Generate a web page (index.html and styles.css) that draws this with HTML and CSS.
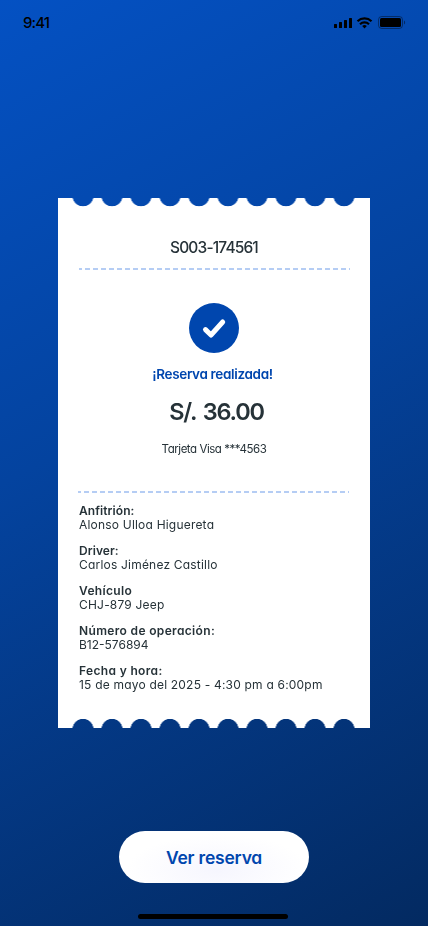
FILE: index.html
```html
<!DOCTYPE html>
<html lang="es">
<head>
<meta charset="utf-8">
<title>Reserva realizada</title>
<link rel="stylesheet" href="styles.css">
</head>
<body>
<div class="screen">
  <header class="status">
    <span class="time">9:41</span>
    <svg class="indicators" width="72" height="14" viewBox="0 0 72 14">
      <rect x="0" y="9" width="3" height="4" rx=".5"/>
      <rect x="5" y="7" width="3" height="6" rx=".5"/>
      <rect x="10" y="5" width="3" height="8" rx=".5"/>
      <rect x="15" y="3" width="3" height="10" rx=".5"/>
      <g fill="none" stroke="#000" stroke-width="2.200">
        <path d="M23.500 6.200a10.200 10.200 0 0 1 14 0"/>
        <path d="M26 9.200a6.600 6.600 0 0 1 9 0"/>
      </g>
      <path d="M30.500 13.400l-2.300-2.300a3.400 3.400 0 0 1 4.600 0z"/>
      <rect x="44.500" y="1.500" width="24" height="12" rx="3.200" fill="none" stroke="#000" stroke-opacity=".4"/>
      <rect x="46" y="3" width="21" height="9" rx="1.500"/>
      <path d="M70 5.500v4c1.500-.6 1.500-3.400 0-4z" opacity=".45"/>
    </svg>
  </header>
  <main class="ticket">
    <h1 class="code">S003-174561</h1>
    <div class="rule"></div>
    <section class="summary">
      <svg class="check" width="50" height="50" viewBox="0 0 50 50">
        <circle cx="25" cy="25" r="25" fill="#0046ae"/>
        <path d="M16.500 26.600l5.500 5.400L33.700 19" fill="none" stroke="#fff" stroke-width="5" stroke-linecap="round" stroke-linejoin="round"/>
      </svg>
      <p class="done">¡Reserva realizada!</p>
      <p class="amount">S/. 36.00</p>
      <p class="card">Tarjeta Visa ***4563</p>
    </section>
    <div class="rule rule-lower"></div>
    <dl class="details">
      <div><dt>Anfitrión:</dt><dd>Alonso Ulloa Higuereta</dd></div>
      <div><dt>Driver:</dt><dd>Carlos Jiménez Castillo</dd></div>
      <div><dt class="wide">Vehículo</dt><dd>CHJ-879 Jeep</dd></div>
      <div><dt class="wide">Número de operación:</dt><dd class="tight">B12-576894</dd></div>
      <div><dt class="wide">Fecha y hora:</dt><dd>15 de mayo del 2025 - 4:30 pm a 6:00pm</dd></div>
    </dl>
  </main>
  <button class="action">Ver reserva</button>
  <div class="home"></div>
</div>
</body>
</html>
```
FILE: styles.css
```css
* { box-sizing: border-box; margin: 0; padding: 0; }
body { font-family: Inter, "Noto Sans", sans-serif; font-feature-settings: "cv11" 1; color: #263238; }
.screen {
  width: 428px; height: 926px; overflow: hidden;
  display: flex; flex-direction: column; align-items: center;
  background: linear-gradient(152deg, #0451c3 0%, #04439f 42%, #032a61 100%);
}
.status { width: 100%; height: 198px; padding: 14px 22px 0 23px; display: flex; justify-content: space-between; align-items: flex-start; color: #000; }
.time { font-size: 15px; line-height: 18px; font-weight: 500; letter-spacing: -.9px; }
.indicators { margin-top: 1px; }
.ticket {
  width: 312px; height: 530px; flex: none; padding: 39px 20px 0; background: #fff;
  -webkit-mask:
    linear-gradient(#000 0 0) 0 12px / 100% 506px no-repeat,
    linear-gradient(#000 0 0) 0 0 / 11px 100% no-repeat,
    linear-gradient(#000 0 0) 100% 0 / 12px 100% no-repeat,
    radial-gradient(circle at 14.5px -2.2px, transparent 10.2px, #000 10.8px) 10.5px 0 / 29px 12px repeat-x,
    radial-gradient(circle at 14.5px 13.4px, transparent 10.2px, #000 10.8px) 10.5px 100% / 29px 12px repeat-x;
}
.code { height: 22px; line-height: 22px; font-size: 15.5px; font-weight: 500; text-align: center; letter-spacing: -.85px; }
.rule { width: 271px; height: 2px; margin: 9px 0 0 1px; background: repeating-linear-gradient(90deg, #b5cdf4 0 5.500px, transparent 5.500px 8px) -2px 0 / 280px 2px; }
.summary { height: 221px; padding-top: 33px; display: flex; flex-direction: column; align-items: center; white-space: nowrap; }
.done { margin-top: 11px; line-height: 20px; font-size: 13.5px; font-weight: 600; color: #0046ae; letter-spacing: -.34px; margin-right: 3px; }
.amount { margin-top: 12px; line-height: 32px; font-size: 23.5px; font-weight: 600; letter-spacing: -1.2px; word-spacing: 2px; margin-left: 5px; }
.card { margin-top: 13px; line-height: 16px; font-size: 11.5px; letter-spacing: -.46px; }
.rule-lower { margin: 0; }
.details { margin-top: 11px; padding-left: 1px; display: grid; gap: 12px; font-size: 12px; line-height: 14px; white-space: nowrap; }
dt { font-weight: 600; letter-spacing: .08px; }
dd { letter-spacing: .2px; }
.wide { letter-spacing: .34px; }
.tight { letter-spacing: 0; }
.action { width: 190px; height: 52px; flex: none; margin-top: 103px; border: 0; border-radius: 26px; background: radial-gradient(ellipse at 52% 75%, #f6f6fe, #fff 65%); color: #0046ae; font: 600 17.5px/52px Inter, "Noto Sans", sans-serif; font-feature-settings: "cv11" 1; letter-spacing: -.2px; padding-top: 1px; }
.home { width: 150px; height: 5px; flex: none; margin: 31px 0 0 -2px; border-radius: 3px; background: #000; }
```
